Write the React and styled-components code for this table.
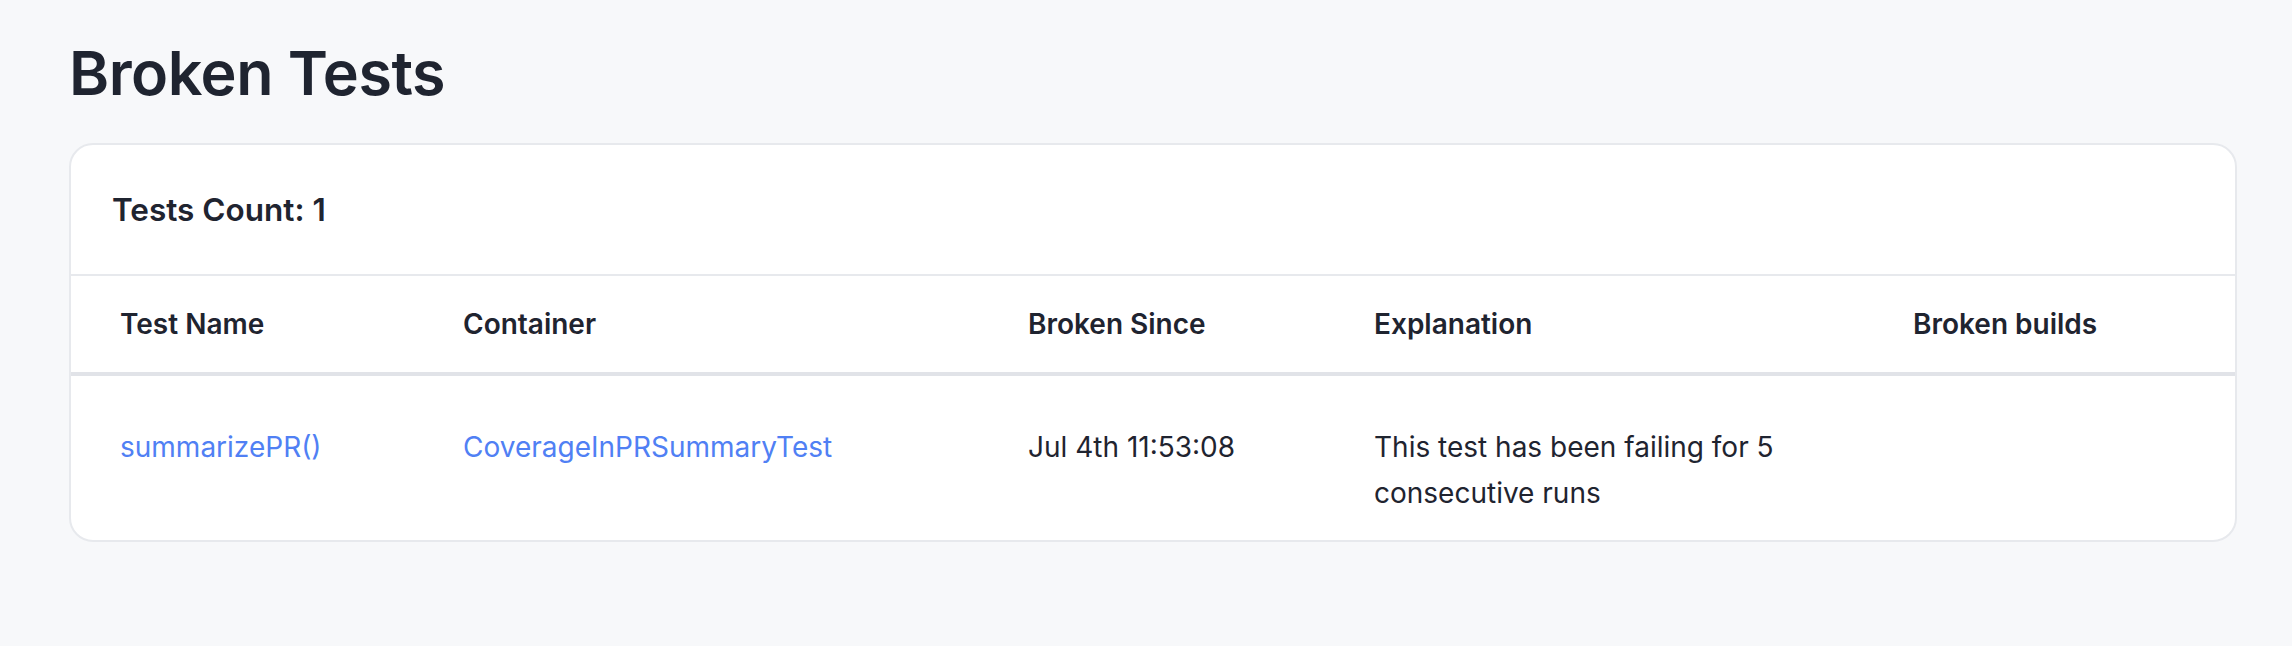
import React from 'react';
import styled, { createGlobalStyle } from 'styled-components';

const GlobalStyle = createGlobalStyle`
    html, body {
        margin: 0;
        padding: 0;
        background: #f7f8fa;
    }

    body {
        font-family: Inter, "Noto Sans", sans-serif;
        color: #1f2430;
    }
`;

const StyledPage = styled.div`
    padding: 37px 55px 60px 69px;
`;

const StyledTitle = styled.h1`
    margin: 0 0 34px;
    font-size: 61px;
    line-height: 72px;
    font-weight: 600;
    letter-spacing: -0.5px;
`;

const StyledCard = styled.div`
    background: #fff;
    border: 2px solid #e7e9ed;
    border-radius: 24px;
    overflow: hidden;
`;

const StyledCardHeader = styled.div`
    height: 129px;
    display: flex;
    align-items: center;
    padding: 0 41px;
    border-bottom: 2px solid #e7e9ed;
    font-size: 31.5px;
    font-weight: 600;
`;

const StyledRow = styled.div`
    display: grid;
    grid-template-columns: 343px 565px 346px 539px 1fr;
    padding-left: 49px;
    align-items: ${props => (props.$head ? 'center' : 'start')};
    min-height: ${props => (props.$head ? '96px' : '0')};
    padding-top: ${props => (props.$head ? '0' : '48px')};
    padding-bottom: ${props => (props.$head ? '0' : '24px')};
    border-bottom: ${props => (props.$head ? '4px solid #e1e3e8' : 'none')};
`;

const StyledHeadCell = styled.div`
    font-size: 28px;
    font-weight: 600;
    padding-right: 40px;
`;

const StyledCell = styled.div`
    font-size: 28px;
    line-height: 46px;
    padding-right: 40px;
    color: ${props => (props.$link ? '#5080f4' : '#1f2430')};
`;

const columns = ['Test Name', 'Container', 'Broken Since', 'Explanation', 'Broken builds'];

const tests = [
    {
        name: 'summarizePR()',
        container: 'CoverageInPRSummaryTest',
        since: 'Jul 4th 11:53:08',
        explanation: 'This test has been failing for 5 consecutive runs',
        builds: '',
    },
];

function App() {
    return (
        <>
            <GlobalStyle />
            <StyledPage>
                <StyledTitle>Broken Tests</StyledTitle>
                <StyledCard>
                    <StyledCardHeader>Tests Count: {tests.length}</StyledCardHeader>
                    <StyledRow $head>
                        {columns.map(col => (
                            <StyledHeadCell key={col}>{col}</StyledHeadCell>
                        ))}
                    </StyledRow>
                    {tests.map(test => (
                        <StyledRow key={test.name}>
                            <StyledCell $link>{test.name}</StyledCell>
                            <StyledCell $link>{test.container}</StyledCell>
                            <StyledCell>{test.since}</StyledCell>
                            <StyledCell>{test.explanation}</StyledCell>
                            <StyledCell>{test.builds}</StyledCell>
                        </StyledRow>
                    ))}
                </StyledCard>
            </StyledPage>
        </>
    );
}

export default App;
